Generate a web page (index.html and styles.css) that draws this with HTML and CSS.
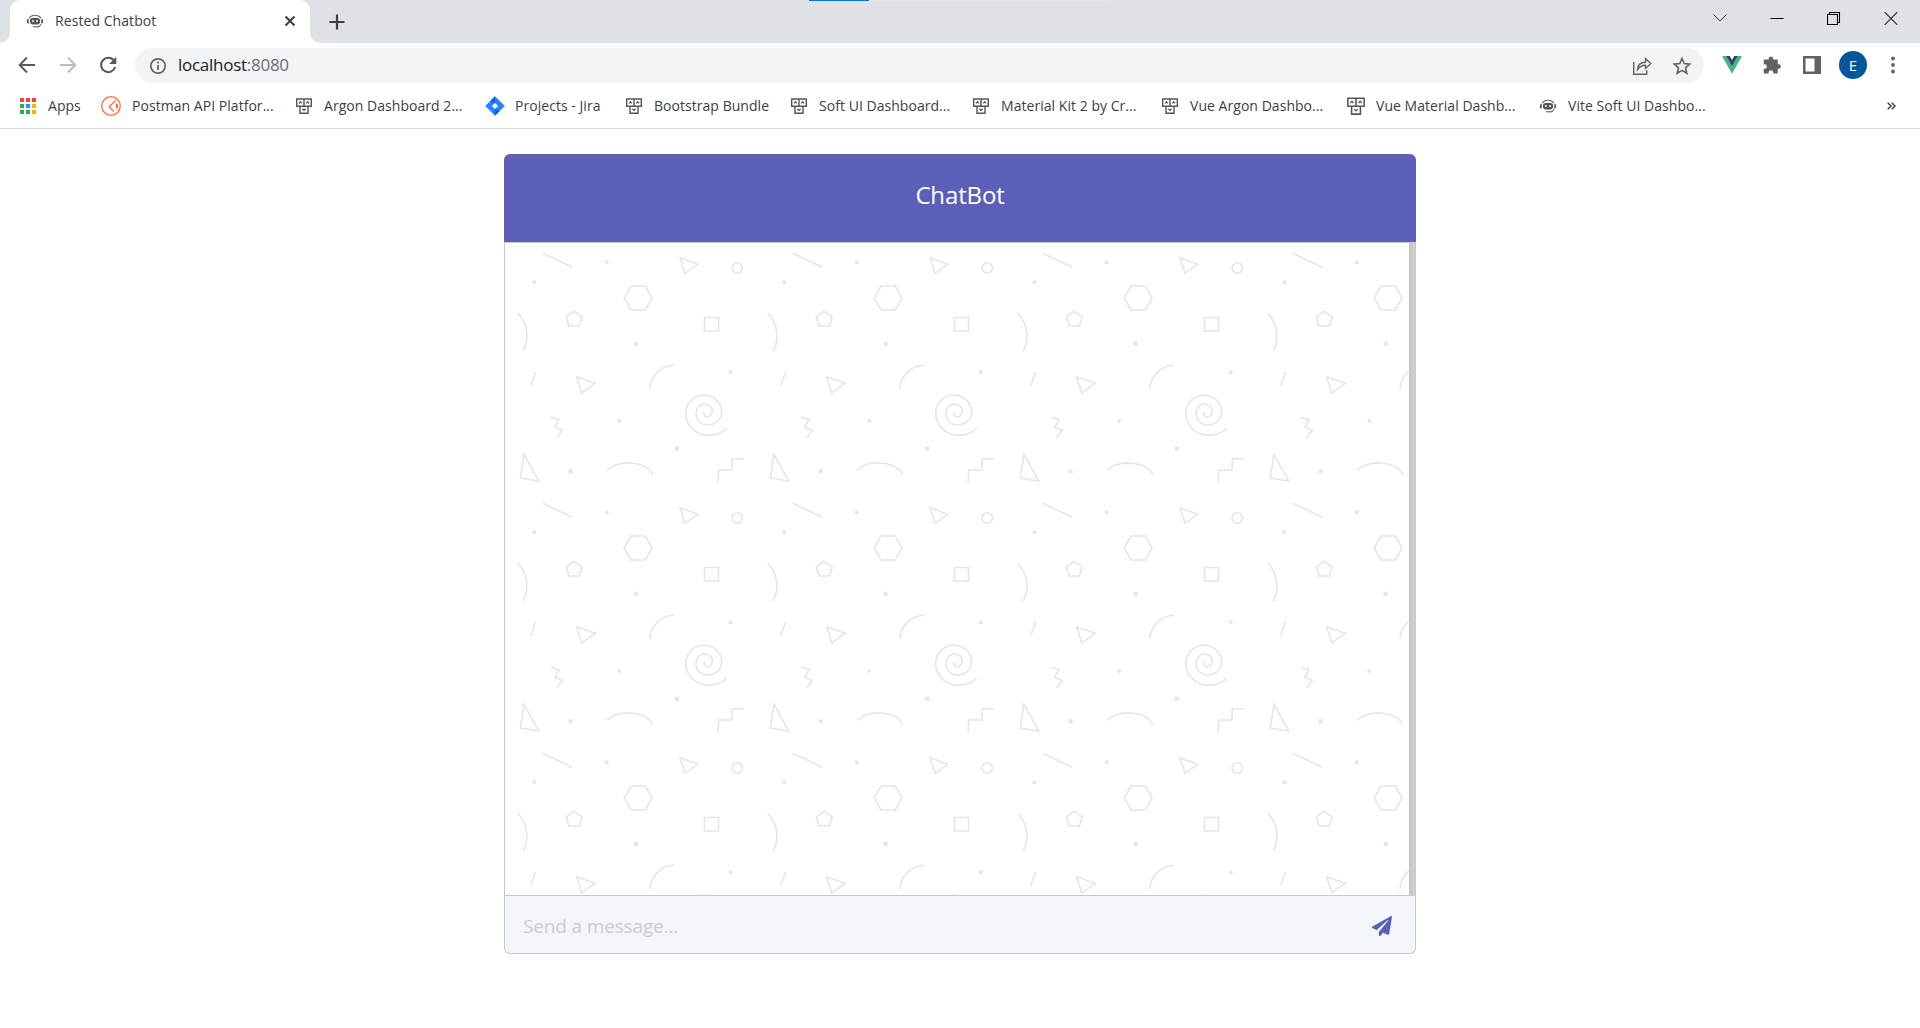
FILE: index.html
```html
<!DOCTYPE html>
<html lang="en">
<head>
<meta charset="utf-8">
<title>Rested Chatbot</title>
<link rel="stylesheet" href="styles.css">
</head>
<body>
<svg class="defs" width="0" height="0" aria-hidden="true">
  <symbol id="tim" viewBox="0 0 18 18">
    <g fill="none" stroke="#555" stroke-width="1.4"><path d="M1.7 2h14.6v7.3H1.7zM9 2v7.3M5 9.3v7h8v-7"/><path d="M4 6.3l1.4-1.6 1.3 1.6M11.3 6.3l1.4-1.6L14 6.3M7.3 11.8L9 13.4l1.7-1.6" stroke-width="1.2"/></g>
  </symbol>
  <symbol id="bot" viewBox="0 0 18 18">
    <path d="M3 6.200C4.500 4.100 6.500 3.200 9 3.200s4.500.9 6 3M15.200 12.200c-.8 1.700-2.200 2.600-4.200 2.800" fill="none" stroke="#666" stroke-width="1.100"/>
    <path d="M2.700 6.800v5C.2 11.600.2 7 2.700 6.800zM15.300 6.800v5c2.500-.2 2.500-4.800 0-5z" fill="#555"/>
    <rect x="3.900" y="6" width="10.200" height="6.400" rx="2.800" fill="#555"/>
    <path d="M6 8h1.800v2H6zM10.200 8H12v2h-1.800z" fill="#ddd"/><path d="M6.500 14h5v1.500h-4z" fill="#888"/>
  </symbol>
</svg>

<header class="browser">
  <div class="tabstrip">
    <div class="progress"><i></i></div>
    <div class="tab">
      <svg class="tab-icon" width="18" height="18"><use href="#bot"/></svg>
      <span class="tab-title">Rested Chatbot</span>
      <svg class="tab-close" width="12" height="12" viewBox="0 0 12 12"><path d="M1.500 1.500l9 9M10.500 1.500l-9 9" stroke="#3c4043" stroke-width="2"/></svg>
    </div>
    <svg class="new-tab" width="16" height="16" viewBox="0 0 16 16"><path d="M8 .5v15M.5 8h15" stroke="#3c4043" stroke-width="2.200"/></svg>
    <div class="window-controls">
      <svg width="14" height="14" viewBox="0 0 14 14"><path d="M.5 3.500L7 10l6.500-6.500" fill="none" stroke="#333"/></svg>
      <svg width="14" height="14" viewBox="0 0 14 14"><path d="M.5 7.500h13" stroke="#000"/></svg>
      <svg width="14" height="14" viewBox="0 0 14 14"><path d="M.5 3.500h10v10H.5zM2.500 3.500v-2h10v10h-2" fill="none" stroke="#000" stroke-width="1.100"/></svg>
      <svg width="14" height="14" viewBox="0 0 14 14"><path d="M.7 1.200l12.600 12.600M13.300 1.200L.7 13.800" stroke="#222" stroke-width="1.100"/></svg>
    </div>
  </div>

  <div class="toolbar">
    <svg class="back" width="18" height="18" viewBox="0 0 18 18"><path d="M17 9H2M9 1.500L1.700 9 9 16.500" fill="none" stroke="#55595e" stroke-width="1.900"/></svg>
    <svg class="forward" width="18" height="18" viewBox="0 0 18 18"><path d="M1 9h15M9 1.500L16.300 9 9 16.500" fill="none" stroke="#babcbe" stroke-width="1.900"/></svg>
    <svg class="reload" width="18" height="18" viewBox="0 0 18 18"><path d="M15 4.500A7.200 7.200 0 1 0 16.200 11" fill="none" stroke="#55595e" stroke-width="2"/><path d="M17.300.8v7.200h-7.200z" fill="#55595e"/></svg>
    <div class="omnibox">
      <svg width="18" height="18" viewBox="0 0 18 18"><circle cx="9" cy="9" r="7.200" fill="none" stroke="#5f6368" stroke-width="1.700"/><path d="M9 8v5M9 4.800v1.800" stroke="#5f6368" stroke-width="1.800"/></svg>
      <span class="url">localhost<span>:8080</span></span>
      <svg class="share" width="20" height="20" viewBox="0 0 20 20"><path d="M1.700 6v12.300h13v-4M5.500 13.500c.3-4.500 3-7.200 8-7.200V2.500l5.300 5-5.300 5V9.300c-4 0-6 1.300-8 4.200z" fill="none" stroke="#5f6368" stroke-width="1.400"/></svg>
      <svg class="star" width="20" height="20" viewBox="0 0 20 20"><path d="M10 2.500l2.200 5.100 5.500.5-4.200 3.700 1.300 5.500L10 14.400l-4.800 2.900 1.300-5.500L2.300 8.100l5.500-.5z" fill="none" stroke="#5f6368" stroke-width="1.600"/></svg>
    </div>
    <svg class="vue" width="20" height="18" viewBox="0 0 20 18"><path d="M0 0h4l6 10.500L16 0h4L10 17.700z" fill="#41b883"/><path d="M4 0h3.800L10 4l2.200-4H16l-6 10.500z" fill="#34495e"/></svg>
    <svg class="puzzle" width="18" height="18" viewBox="0 0 18 18"><path d="M1.700 3.500h4V2.600a2.200 2.200 0 0 1 4.400 0v.9h3.700q1 0 1 1v3.800h.9a2.200 2.200 0 0 1 0 4.400h-.9v3.800q0 1-1 1h-3.600v-1a2.300 2.300 0 0 0-4.600 0v1H1.700q-1 0-1-1v-3.600h.9a2.300 2.300 0 0 0 0-4.600H.7V4.500q0-1 1-1z" fill="#5f6368"/></svg>
    <svg class="panel" width="18" height="18" viewBox="0 0 18 18"><path d="M0 0h18v18H0zM2.500 2.500v13h9v-13z" fill="#5f6368" fill-rule="evenodd"/></svg>
    <span class="avatar">E</span>
    <svg class="more" width="4" height="18" viewBox="0 0 4 18"><g fill="#5f6368"><circle cx="2" cy="2.500" r="1.900"/><circle cx="2" cy="9" r="1.900"/><circle cx="2" cy="15.500" r="1.900"/></g></svg>
  </div>

  <nav class="bookmarks">
    <a class="b-apps"><svg width="18" height="18" viewBox="0 0 18 18"><path d="M1 1h4v4H1zM7 1h4v4H7zM13 1h4v4h-4z" fill="#f44336"/><path d="M1 7h4v4H1zM1 13h4v4H1zM7 13h4v4H7z" fill="#34a853"/><path d="M7 7h4v4H7z" fill="#2196f3"/><path d="M13 7h4v4h-4zM13 13h4v4h-4z" fill="#fbae05"/></svg><span>Apps</span></a>
    <a class="b-postman"><svg width="20" height="20" viewBox="0 0 20 20"><g fill="none" stroke="#ff6c37" stroke-width="1.300"><circle cx="10" cy="10" r="9.300"/><path d="M14.500 4.500L8.200 10.800l4.800 4.700M15.800 8q1.500 2 0 4-1.300-2 0-4z"/></g></svg><span>Postman API Platfor...</span></a>
    <a class="b-argon"><svg width="18" height="18"><use href="#tim"/></svg><span>Argon Dashboard 2...</span></a>
    <a class="b-jira"><svg width="20" height="20" viewBox="0 0 20 20"><path d="M10 .2l9.800 9.800-9.800 9.800L.2 10z" fill="#2684ff"/><path d="M10 .2v7L5.200 5zM10 19.800v-7l4.800 2.200z" fill="#1260d4"/><path d="M10 6.900l3.100 3.100-3.100 3.100L6.900 10z" fill="#fff"/></svg><span>Projects - Jira</span></a>
    <a class="b-bundle"><svg width="18" height="18"><use href="#tim"/></svg><span>Bootstrap Bundle</span></a>
    <a class="b-soft"><svg width="18" height="18"><use href="#tim"/></svg><span>Soft UI Dashboard...</span></a>
    <a class="b-kit"><svg width="18" height="18"><use href="#tim"/></svg><span>Material Kit 2 by Cr...</span></a>
    <a class="b-vargon"><svg width="18" height="18"><use href="#tim"/></svg><span>Vue Argon Dashbo...</span></a>
    <a class="b-vmat"><svg width="20" height="20"><use href="#tim"/></svg><span>Vue Material Dashb...</span></a>
    <a class="b-vite"><svg width="18" height="18"><use href="#bot"/></svg><span>Vite Soft UI Dashbo...</span></a>
    <svg class="overflow" width="9" height="8" viewBox="0 0 9 8"><path d="M.7.7L4 4 .7 7.300M4.700.7L8 4 4.700 7.300" fill="none" stroke="#444" stroke-width="1.500"/></svg>
  </nav>
</header>

<main class="chat">
  <h1 class="chat-header">ChatBot</h1>
  <div class="messages">
    <svg class="doodles" width="904" height="652">
      <defs>
        <pattern id="shapes" width="250" height="250" patternUnits="userSpaceOnUse">
          <g fill="none" stroke="#e5e5e5" stroke-width="1.600">
            <path d="M37.700 10.300l29.600 14M175 14.700l17.700 6.600L180 30.300zM119.300 55L126 43h14.300L147 55l-6.700 12H126zM69 68.300l8.300 5.700-3 9H64l-2.700-9zM199.500 74.500h14V88h-14z"/>
            <circle cx="232.300" cy="25" r="5.200"/>
            <path d="M12.700 70C22 80 25 95 18.300 108M30.700 128.700l-5 14M71.700 134l18.600 6.300-13.600 9.700zM145 146c0-12 11-23.700 24-23.700M45.700 174l8.300 2.700-4.300 7.600 7.600 3-5.600 7.700M19 211.300L33.700 238l-18.400-3zM102 227.300c10-10 37-11 46 4M213 239.300l.7-12.300H227l.3-11.300h12"/>
            <path d="M199 168.700C198.500 172 200 174 202 174C205 174 207.300 171 207.300 167.700C207.300 163.500 203.500 161 199.300 161C194.500 161 191 165.500 191 170.700C191 177 196 182 202.500 182C210.500 182 216.700 176.300 216.700 168.700C216.700 159.500 208.500 152.300 199 152.300C188.700 152.300 180.700 160.500 180.700 170.300C180.700 182.500 191 192.300 203.300 192.300C210 192.300 216.500 190 221.700 185.300"/>
          </g>
          <g fill="#e5e5e5"><circle cx="101.700" cy="19.300" r="2"/><circle cx="29.300" cy="39.300" r="2"/><circle cx="225.700" cy="129.300" r="2"/><circle cx="114.300" cy="178" r="2"/><path d="M128.700 98.800h4v4h-4zM170 203.700h4v4h-4zM63.700 226.300h4v4h-4z"/></g>
        </pattern>
      </defs>
      <rect width="904" height="652" fill="url(#shapes)"/>
    </svg>
    <div class="scrollbar"></div>
  </div>
  <div class="composer">
    <span>Send a message...</span>
    <svg width="20" height="20" viewBox="0 0 512 512"><path fill="#5b5fb8" d="M476 3.200L12.500 270.600c-18.100 10.400-15.800 35.600 2.200 43.200L121 358.400l287.300-253.200c5.500-4.900 13.300 2.600 8.600 8.300L176 407v80.500c0 23.600 28.500 32.900 42.500 15.800L282 426l124.600 52.200c14.200 6 30.400-2.900 33-18.200l72-432C515 7.800 493.300-6.800 476 3.200z"/></svg>
  </div>
</main>
</body>
</html>
```
FILE: styles.css
```css
* { box-sizing: border-box; }
body { margin: 0; background: #fff; font-family: "Open Sans", "Noto Sans", sans-serif; color: #3c4043; overflow: hidden; }
svg { display: block; flex: none; }
.defs { position: absolute; }
.browser { height: 129px; border-bottom: 1px solid #dadbdd; }
.tabstrip { position: relative; height: 43px; background: #dee1e6; display: flex; padding-left: 10px; align-items: center; }
.progress { position: absolute; left: 809px; top: 0; width: 301px; height: 1px; background: #e6e6e6; }
.progress i { display: block; width: 60px; height: 1px; background: #0078d7; }
.tab { position: relative; align-self: flex-end; width: 300px; height: 43px; background: #fff; border-radius: 10px 10px 0 0; display: flex; align-items: center; padding: 0 14px 1px 16px; }
.tab::before, .tab::after { content: ""; position: absolute; bottom: 0; width: 10px; height: 10px; }
.tab::before { left: -10px; background: radial-gradient(circle at 0 0, transparent 9.500px, #fff 10px); }
.tab::after { right: -10px; background: radial-gradient(circle at 100% 0, transparent 9.500px, #fff 10px); }
.tab-title { margin-left: 11px; flex: 1; padding-bottom: 1px; font-size: 14px; letter-spacing: .07px; white-space: nowrap; }
.new-tab { margin-left: 19px; }
.window-controls { margin-left: auto; display: flex; gap: 43px; padding: 0 22px 7px 0; }
.toolbar { height: 43px; display: flex; align-items: center; padding: 0 25px 0 18px; }
.forward { margin-left: 23px; }
.reload { margin-left: 22px; }
.omnibox { margin-left: 18px; width: 1570px; height: 35px; background: #f1f3f4; border-radius: 18px; display: flex; align-items: center; padding: 0 12px 0 14px; margin-top: 2px; }
.url { margin-left: 11px; flex: 1; font-size: 17px; letter-spacing: -.27px; color: #202124; line-height: 24px; padding-bottom: 1px; }
.url span { color: #6b6f73; }
.star { margin-left: 20px; }
.vue { margin-left: 18px; }
.puzzle { margin-left: 21px; }
.panel { margin-left: 22px; }
.avatar { margin-left: 18px; width: 28px; height: 28px; border-radius: 50%; background: #01579b; color: #fff; font-size: 15px; line-height: 28px; text-align: center; }
.more { margin-left: 24px; }
.bookmarks { position: relative; height: 42px; display: flex; align-items: center; padding: 0 24px 2px 19px; }
.bookmarks a { display: flex; align-items: center; font-size: 14px; white-space: nowrap; letter-spacing: .04px; }
.bookmarks a span { margin-left: 11px; padding-bottom: 2px; }
.b-apps { width: 82px; }
.b-postman { width: 194px; }
.b-argon { width: 190px; }
.b-jira { width: 140px; }
.bookmarks .b-jira span { margin-left: 10px; }
.b-bundle { width: 165px; }
.b-soft { width: 182px; }
.b-kit { width: 189px; }
.b-vargon { width: 185px; }
.b-vmat { width: 193px; }
.bookmarks .b-vmat span { margin-left: 10px; }
.overflow { margin-left: auto; }
.chat { width: 912px; height: 800px; margin: 25px auto 0; display: flex; flex-direction: column; }
.chat-header { margin: 0; height: 88px; border-radius: 6px 6px 0 0; background: #5b5fb8; color: #fff; font-weight: 400; font-size: 24px; letter-spacing: -.15px; line-height: 82px; text-align: center; }
.messages { height: 654px; border: 1px solid #c8c8c8; display: flex; background: #fff; }
.scrollbar { flex: 1; background: linear-gradient(90deg, #c4c4c4, #d0d0d0); }
.composer { height: 58px; border: 1px solid #c8c8c8; border-top: 0; border-radius: 0 0 6px 6px; background: #f2f6fa; display: flex; justify-content: space-between; align-items: center; padding: 3px 23px 0 18px; color: #ccc; font-size: 19px; letter-spacing: -.15px; }
```
